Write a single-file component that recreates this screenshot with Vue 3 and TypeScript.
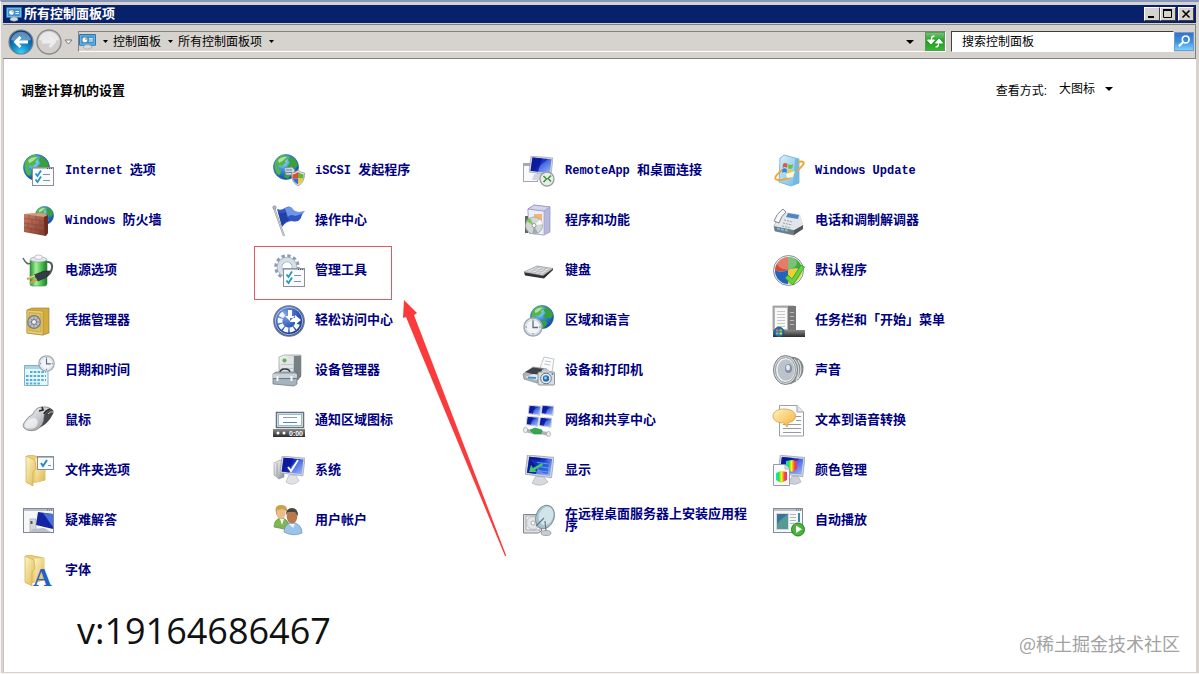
<script setup lang="ts">
import { ref } from 'vue'

interface Glyph {
  text: string
  x: number
  y: number
  kind: string
}

interface PanelItem {
  icon: string
  latin?: string
  text?: string
  glyph?: Glyph
}

const items: PanelItem[] = [
  { icon: 'internet', latin: 'Internet', text: '选项' },
  { icon: 'iscsi', latin: 'iSCSI', text: '发起程序' },
  { icon: 'remoteapp', latin: 'RemoteApp', text: '和桌面连接' },
  { icon: 'update', latin: 'Windows Update' },
  { icon: 'firewall', latin: 'Windows', text: '防火墙' },
  { icon: 'flag', text: '操作中心' },
  { icon: 'programs', text: '程序和功能' },
  { icon: 'phone', text: '电话和调制解调器' },
  { icon: 'power', text: '电源选项' },
  { icon: 'admin', text: '管理工具' },
  { icon: 'keyboard', text: '键盘' },
  { icon: 'defaults', text: '默认程序' },
  { icon: 'vault', text: '凭据管理器' },
  { icon: 'access', text: '轻松访问中心' },
  { icon: 'region', text: '区域和语言' },
  { icon: 'taskbar', text: '任务栏和「开始」菜单' },
  { icon: 'date', text: '日期和时间' },
  { icon: 'device', text: '设备管理器' },
  { icon: 'printers', text: '设备和打印机' },
  { icon: 'sound', text: '声音' },
  { icon: 'mouse', text: '鼠标' },
  { icon: 'tray', text: '通知区域图标', glyph: { text: '0:00', x: 17, y: 32, kind: 'glyph-clock' } },
  { icon: 'network', text: '网络和共享中心' },
  { icon: 'speech', text: '文本到语音转换' },
  { icon: 'folderopt', text: '文件夹选项' },
  { icon: 'system', text: '系统' },
  { icon: 'display', text: '显示' },
  { icon: 'color', text: '颜色管理' },
  { icon: 'trouble', text: '疑难解答' },
  { icon: 'users', text: '用户帐户' },
  { icon: 'install', text: '在远程桌面服务器上安装应用程序' },
  { icon: 'autoplay', text: '自动播放' },
  { icon: 'fonts', text: '字体', glyph: { text: 'A', x: 11, y: 32, kind: 'glyph-letter' } },
]

const crumbs: string[] = ['控制面板', '所有控制面板项']
const query = ref('')
const view = ref('大图标')
</script>

<template>
  <svg class="defs" aria-hidden="true">
    <defs>
      <radialGradient id="gSea" cx=".38" cy=".28" r=".8">
        <stop offset="0" stop-color="#b5e6fb" /><stop offset=".4" stop-color="#3c93dc" /><stop offset="1" stop-color="#0b3c94" />
      </radialGradient>
      <linearGradient id="gScreen" x1="0" y1="0" x2="1" y2="1">
        <stop offset="0" stop-color="#0a1a9c" /><stop offset=".45" stop-color="#1b35c8" /><stop offset=".5" stop-color="#4668e2" /><stop offset="1" stop-color="#a3bcf8" />
      </linearGradient>
      <linearGradient id="gMetal" x1="0" y1="0" x2="1" y2="1">
        <stop offset="0" stop-color="#fafafa" /><stop offset=".5" stop-color="#c9ccd0" /><stop offset="1" stop-color="#7f858c" />
      </linearGradient>
      <linearGradient id="gFolder" x1="0" y1="0" x2="1" y2="1">
        <stop offset="0" stop-color="#fdf6c8" /><stop offset="1" stop-color="#dfb650" />
      </linearGradient>
      <linearGradient id="gGreen" x1="0" y1="0" x2="1" y2="0">
        <stop offset="0" stop-color="#258f2d" /><stop offset=".35" stop-color="#a4f09a" /><stop offset=".7" stop-color="#43bd45" /><stop offset="1" stop-color="#1f7a28" />
      </linearGradient>
      <linearGradient id="gBrick" x1="0" y1="0" x2="1" y2="1">
        <stop offset="0" stop-color="#c98067" /><stop offset="1" stop-color="#7c3527" />
      </linearGradient>
      <linearGradient id="gDark" x1="0" y1="0" x2="0" y2="1">
        <stop offset="0" stop-color="#8a8a8a" /><stop offset="1" stop-color="#2c2c2c" />
      </linearGradient>
      <linearGradient id="gBlueBox" x1="0" y1="0" x2="1" y2="1">
        <stop offset="0" stop-color="#d8f1fc" /><stop offset="1" stop-color="#6db9e6" />
      </linearGradient>
      <linearGradient id="gRainbow" x1="0" y1="0" x2="1" y2="0">
        <stop offset="0" stop-color="#19d8f5" /><stop offset=".25" stop-color="#20e648" /><stop offset=".5" stop-color="#f7f41c" /><stop offset=".8" stop-color="#fa4131" /><stop offset="1" stop-color="#ef24b4" />
      </linearGradient>
      <radialGradient id="gBack" cx=".5" cy=".95" r=".9">
        <stop offset="0" stop-color="#35d4f8" /><stop offset=".45" stop-color="#1181c5" /><stop offset="1" stop-color="#0d3d7c" />
      </radialGradient>
      <radialGradient id="gOrb" cx=".35" cy=".3" r=".8">
        <stop offset="0" stop-color="#7ea5ea" /><stop offset=".6" stop-color="#2a52b0" /><stop offset="1" stop-color="#153174" />
      </radialGradient>
      <linearGradient id="gBubble" x1="0" y1="0" x2="1" y2="1">
        <stop offset="0" stop-color="#fff3bd" /><stop offset="1" stop-color="#f3b13a" />
      </linearGradient>
    </defs>

    <symbol id="globe" viewBox="0 0 26 26">
      <circle cx="13" cy="13" r="12.5" fill="url(#gSea)" stroke="#2c65a7" stroke-width=".7" />
      <path d="M3 6Q7 1 13 1L15 4 12 7 13 9 9 12 6 11 5 14 8 17 7 21 4 20Q0 13 3 6Z" fill="#51b848" />
      <path d="M17 2Q23 5 25 11L22 15 19 13 16 15 14 12 17 9 15 6ZM12 17L17 17 19 20 15 25 11 23Z" fill="#38a13c" />
      <path d="M5 6Q9 2 14 3Q10 7 6 9Z" fill="#e4f8cf" opacity=".65" />
    </symbol>

    <symbol id="checks" viewBox="0 0 22 19">
      <rect x=".5" y=".5" width="21" height="18" fill="#fbfcfe" stroke="#8a8f97" />
      <path d="M1 1.500H21" stroke="#b9bec6" stroke-width="1.2" />
      <path d="M15 1.500h1M17 1.500h1M19 1.500h1" stroke="#555" />
      <path d="M3.500 6.500L5.500 9 9 3.500M3.500 12.500L5.500 15 9 9.500" fill="none" stroke="#2593c4" stroke-width="1.8" />
      <path d="M11 7.500H18M11 13.500H18" stroke="#7d8fb3" />
    </symbol>

    <symbol id="clock" viewBox="0 0 20 20">
      <circle cx="10" cy="10" r="9" fill="#f1f5f8" stroke="#a2aab2" stroke-width="1.6" />
      <circle cx="10" cy="10" r="7.200" fill="none" stroke="#cdd6dd" />
      <path d="M10 4V10.500H15" fill="none" stroke="#5c6c7d" stroke-width="1.3" />
      <path d="M10 2.500V4M10 16V17.500M2.500 10H4M16 10H17.500" stroke="#7b8792" />
    </symbol>

    <symbol id="monitor" viewBox="0 0 24 20">
      <path d="M2 0L24 2 22 19 0 16Z" fill="#d3d8e0" stroke="#9198a4" stroke-width=".6" />
      <path d="M3.500 1.500L22.500 3.300 20.800 17.400 1.600 14.800Z" fill="url(#gScreen)" />
      <path d="M3.500 1.500L13 2.400 9 15.800 1.600 14.800Z" fill="#0a1796" opacity=".8" />
    </symbol>

    <symbol id="folder" viewBox="0 0 22 31">
      <path d="M2 1L5 0 20 3V25L11 27 2 28Z" fill="#ecd078" stroke="#cda948" stroke-width=".7" />
      <path d="M10 4L20 3V25L11 28Z" fill="url(#gFolder)" />
      <path d="M1 1L10 5 11 14 8 17V31L1 27Z" fill="url(#gFolder)" stroke="#d2ad4d" stroke-width=".7" />
    </symbol>

    <symbol id="i-panel" viewBox="0 0 16 16">
      <rect x=".5" y="1.500" width="15" height="10" rx=".5" fill="#71b9ea" stroke="#2f75a9" />
      <rect x="2" y="3" width="12" height="7" fill="#3f93d2" />
      <circle cx="5.500" cy="6.500" r="2.300" fill="#fff" /><path d="M5.500 6.500V4.200A2.300 2.300 0 0 1 7.800 6.500Z" fill="#f2b632" />
      <path d="M9.500 5.500H13M9.500 7.500H13" stroke="#fff" />
      <path d="M4 14Q4 11 8 11T12 14Q8 16.500 4 14Z" fill="#d9d9d9" stroke="#999" stroke-width=".5" />
    </symbol>

    <symbol id="i-internet" viewBox="0 0 33 33">
      <use href="#globe" x="1" y="0" width="27" height="27" />
      <use href="#checks" x="10" y="13" width="22" height="19" />
    </symbol>

    <symbol id="i-firewall" viewBox="0 0 33 33">
      <use href="#globe" x="13" y="2" width="19" height="19" />
      <path d="M2 10L19 9 26 11V29L24 32 2 28Z" fill="url(#gBrick)" />
      <path d="M2 10L19 9 26 11 22 13Z" fill="#d79a83" />
      <path d="M2 14.500L22 17M2 19L22 22M2 23.500L22 27M7 11V15M14 12V16M10 15.500V20M18 16.500V21.500M6 19.500V24M14 21V25.500M9 24.500V29M18 26.500V31" stroke="#6c2c20" stroke-width=".7" opacity=".45" />
      <path d="M22 13L26 11V29L22.500 32Z" fill="#6e2d22" />
    </symbol>

    <symbol id="i-power" viewBox="0 0 33 33">
      <path d="M1 4Q5 12 9 9" fill="none" stroke="#59636b" stroke-width="1.500" />
      <path d="M23 8Q31 7 30 14Q29 20 24 22" fill="none" stroke="#4f5963" stroke-width="2" />
      <rect x="8" y="5" width="17" height="27" rx="2.500" fill="url(#gGreen)" stroke="#4d8b50" stroke-width=".6" />
      <ellipse cx="16.500" cy="5.500" rx="8.500" ry="2.600" fill="#dfe5e8" stroke="#8b979d" stroke-width=".6" />
      <ellipse cx="16.500" cy="3.200" rx="3.800" ry="2.200" fill="#f7f9fb" stroke="#98a2ac" stroke-width=".6" />
      <path d="M12 21L22 17 28 17 25 23 16 27Z" fill="#353c48" stroke="#1e222b" stroke-width=".6" />
      <path d="M13 22L5 25M15 25.500L8 29" stroke="#c9a04a" stroke-width="2" /><path d="M13 21.500L6 24" stroke="#f6e6b4" stroke-width=".8" />
    </symbol>

    <symbol id="i-vault" viewBox="0 0 33 33">
      <path d="M5 6L10 4H27V29L21 31 5 29Z" fill="#d3ac3c" stroke="#90742b" stroke-width=".6" />
      <path d="M5 6L21 7V31L5 29Z" fill="#e8cf70" stroke="#a3842e" stroke-width=".6" />
      <path d="M7 8.500L19 9.500V28L7 26.500Z" fill="#dfc060" stroke="#b1923a" stroke-width=".6" />
      <circle cx="12" cy="18" r="6.300" fill="#bdc1c4" stroke="#747a80" stroke-width="1.200" />
      <path d="M12 12.500V23.500M6.500 18H17.500M8 14L16 22M16 14L8 22" stroke="#7d8389" stroke-width=".7" />
      <circle cx="12" cy="18" r="2.500" fill="#eff1f3" stroke="#6a7076" />
    </symbol>

    <symbol id="i-iscsi" viewBox="0 0 33 33">
      <use href="#globe" x="1" y="0" width="26" height="26" />
      <path d="M12 14L20 13 23 16 22 21 14 21Z" fill="#cdd6e4" stroke="#727d90" stroke-width=".7" /><path d="M14 16H20M14 18.500H20" stroke="#6e7f9c" />
      <path d="M26 16Q29 19 32.500 19Q33 28 26 32Q19 28 19.500 19Q23 19 26 16Z" fill="#e0e4e8" stroke="#858b93" stroke-width=".7" />
      <path d="M26 18Q23 20 20.500 20.500V24.500H26Z" fill="#e64b2f" /><path d="M26 18Q29 20 31.500 20.500V24.500H26Z" fill="#65b63b" />
      <path d="M20.500 24.500H26V30.500Q22 28.500 20.500 24.500Z" fill="#2674d4" /><path d="M26 24.500H31.500Q30 28.500 26 30.500Z" fill="#f6c72c" />
    </symbol>

    <symbol id="i-flag" viewBox="0 0 33 33">
      <path d="M5 5Q9 7 13 4T20 4Q23 10 33 7Q30 9 29 14Q26 19 20 17Q14 17 10 23Z" fill="#2f56c4" />
      <path d="M13 4Q18 2 20 4Q23 10 33 7Q29 11 23 12Q18 9 15 14Z" fill="#87aaf1" opacity=".75" />
      <path d="M6 8Q11 11 14 7L17 16Q12 18 10 22Z" fill="#183798" opacity=".65" />
      <path d="M2 4L12 32" stroke="#8b9097" stroke-width="2" /><path d="M2 4L12 32" stroke="#e3e5e8" stroke-width=".8" />
      <circle cx="2.500" cy="3.500" r="1.700" fill="#b4b8bd" stroke="#777" stroke-width=".5" />
    </symbol>

    <symbol id="i-admin" viewBox="0 0 33 33">
      <circle cx="15" cy="13" r="11" fill="none" stroke="#8e9dad" stroke-width="3.500" stroke-dasharray="3.200 2.560" />
      <circle cx="15" cy="13" r="7.500" fill="none" stroke="#a2afbd" stroke-width="5.500" />
      <circle cx="15" cy="13" r="7.500" fill="none" stroke="#d5dfe8" stroke-width="4" />
      <use href="#checks" x="11" y="14" width="22" height="19" />
    </symbol>

    <symbol id="i-access" viewBox="0 0 33 33">
      <circle cx="17" cy="17" r="15.200" fill="url(#gOrb)" stroke="#6e7b96" stroke-width="1.300" />
      <circle cx="17" cy="17" r="13.700" fill="none" stroke="#cfdbf2" stroke-width=".8" />
      <path d="M25.500 20A9 9 0 1 1 13 9" fill="none" stroke="#f4f8ff" stroke-width="5" stroke-dasharray="4.600 1.200" />
      <path d="M16 6H20V12H23L18 17 13 12H16ZM29 16L23 11V14H18V18H23V21Z" fill="#fff" />
    </symbol>

    <symbol id="i-remoteapp" viewBox="0 0 33 33">
      <rect x="1.500" y="9.500" width="14" height="18" fill="#f8f9fa" stroke="#a3a8ae" /><path d="M2 11H15" stroke="#a6acb6" stroke-width="2" />
      <path d="M12 20H19L20 26H10Z" fill="#d3d7dc" />
      <use href="#monitor" x="7" y="2" width="24" height="20" />
      <circle cx="25" cy="25" r="7" fill="#e9ecea" stroke="#999f9d" stroke-width="1.300" />
      <path d="M21.500 22L24.500 25 21.500 28M29 21.500L26 24.500 29 27.500" fill="none" stroke="#37943a" stroke-width="1.500" />
    </symbol>

    <symbol id="i-programs" viewBox="0 0 33 33">
      <path d="M6 5L12 1 28 3V28L22 31 7 29Z" fill="#b5b8dc" stroke="#8588b4" stroke-width=".6" />
      <path d="M6 5L22 7V31L7 29Z" fill="#eceefa" stroke="#9a9dbd" stroke-width=".6" />
      <path d="M6 5L12 1 28 3 22 7Z" fill="#d3d5ee" stroke="#8689aa" stroke-width=".6" />
      <path d="M12 10H20V20H12Z" fill="#f3b475" />
      <rect x="3" y="12" width="3" height="17" fill="#5f6670" />
      <circle cx="12" cy="21.500" r="8.500" fill="#d2d9d4" stroke="#949c9a" stroke-width=".7" />
      <path d="M12 21.500L4 17A9 9 0 0 1 8 14Z" fill="#83c45e" /><path d="M12 21.500L18 15.500A9 9 0 0 1 20.500 20Z" fill="#f8f9fa" /><path d="M12 21.500L10 30 16 29Z" fill="#9eacb2" />
      <circle cx="12" cy="21.500" r="2" fill="#fff" stroke="#838b91" stroke-width=".8" />
    </symbol>

    <symbol id="i-keyboard" viewBox="0 0 33 33">
      <path d="M2 18L21 21 31 14V16L22 24.500 3 21.500Z" fill="#2f3133" />
      <path d="M2 18L15 12 31 14.500 21 21.500Z" fill="#e9eaec" stroke="#777b7f" stroke-width=".6" />
      <path d="M5 17.500L23 20M8 16L25 18.500M11 14.500L27 17M14 13L29 15.500M8 19L17 12.500M12 19.500L21 13.500M16 20L25 14M20 21L29 14.500" stroke="#a4a8ad" stroke-width=".6" />
    </symbol>

    <symbol id="i-region" viewBox="0 0 33 33">
      <use href="#globe" x="8" y="1" width="24" height="24" />
      <use href="#clock" x="1" y="13" width="20" height="20" />
    </symbol>

    <symbol id="i-update" viewBox="0 0 33 33">
      <path d="M8 4L12 1 27 5V29L19 32 7 28Z" fill="url(#gBlueBox)" stroke="#5aa2cd" stroke-width=".7" />
      <path d="M23 5L27 5V29L21 31Z" fill="#74b8df" />
      <path d="M11 10Q13 8 15.500 10L15 14Q13 12 10.500 14Z" fill="#e85a2d" /><path d="M16.500 10Q19 12 21 10L20.500 14Q18 16 16 14Z" fill="#73bd3d" />
      <path d="M10.300 15Q12.500 13.500 15 15.500L14.500 19Q12 17 10 19Z" fill="#3384db" /><path d="M16 15.500Q18 17 20.500 15.500L20 19Q18 21 15.500 19Z" fill="#f7c834" />
      <path d="M10 16Q-1 25 6 26Q14 27 22 20M25 17Q34 9 31 8Q30 7 26 8" fill="none" stroke="#efa62d" stroke-width="1.900" />
      <path d="M14 20L23 17 21 23 15 24Z" fill="#fff8dc" />
    </symbol>

    <symbol id="i-phone" viewBox="0 0 33 33">
      <path d="M2 22L9 9 27 11 31 22 22 31 3 27Z" fill="#b7bdc3" stroke="#7d848b" stroke-width=".7" />
      <path d="M2 22L22 26 22 31 3 27Z" fill="#6f7a83" /><path d="M22 26L31 21V25L22 31Z" fill="#50585f" />
      <path d="M2 22L10 8 28 10 31 21 22 26Z" fill="#e2e5e9" />
      <path d="M16 9L27 11 26 15 14 13Z" fill="#4d87bf" />
      <path d="M2 17Q4 10 11 5L14 8Q9 12 7 19Z" fill="#f8f9fa" stroke="#767e86" stroke-width=".9" />
      <path d="M12 16L21 18M11 19L20 21M10 22L19 24" stroke="#9aa2aa" stroke-dasharray="2 1" />
      <path d="M5 24.500L17 27" stroke="#6cc1e3" stroke-width="2" stroke-dasharray="3 1" />
    </symbol>

    <symbol id="i-defaults" viewBox="0 0 33 33">
      <circle cx="16.500" cy="16.500" r="15" fill="#eceef1" stroke="#899097" />
      <path d="M16 16V3A13.500 13.500 0 0 0 3 16Q9 19 16 16Z" fill="#da4a32" /><path d="M16 16V3A13.500 13.500 0 0 1 30 16Q24 13 16 16Z" fill="#48a942" />
      <path d="M3 16A13.500 13.500 0 0 0 16 30V16Q9 19 3 16Z" fill="#2462bf" /><path d="M16 16V30A13.500 13.500 0 0 0 30 16Q24 13 16 16Z" fill="#f2cd35" />
      <ellipse cx="15" cy="9" rx="10" ry="6.500" fill="#fff" opacity=".28" />
      <path d="M13 24L16 21 20 25 29 11 32.500 13 21 31Z" fill="#62d63e" stroke="#2d9a26" stroke-width=".8" />
    </symbol>

    <symbol id="i-taskbar" viewBox="0 0 33 33">
      <path d="M1 2H22V27H1Z" fill="#b8b8b8" stroke="#777" stroke-width=".6" /><path d="M16 2H24V27H16Z" fill="#777" />
      <rect x="3" y="4" width="12" height="21" fill="#f8f8f8" /><path d="M5 7.500H13M5 10.500H13M5 13.500H13M5 16.500H13M5 19.500H13M5 22.500H13" stroke="#c5c9cd" />
      <path d="M18 8.500H22M18 12.500H22M18 16.500H22M18 20.500H22" stroke="#b9b9b9" />
      <rect x="1" y="26" width="32" height="7" fill="url(#gDark)" />
      <circle cx="7" cy="28" r="5" fill="#2073a8" stroke="#1e3f57" stroke-width=".6" />
      <path d="M4 25.500H6.500V27.500H4Z" fill="#eb7542" /><path d="M7.500 25.500H10V27.500H7.500Z" fill="#8cc84d" /><path d="M4 28.500H6.500V30.500H4Z" fill="#69b4f0" /><path d="M7.500 28.500H10V30.500H7.500Z" fill="#f7cf45" />
    </symbol>

    <symbol id="i-date" viewBox="0 0 33 33">
      <path d="M2.500 11.500H24L26 14V31.500H2.500Z" fill="#e8f5fa" stroke="#84b0c3" />
      <path d="M3 12H25V15H3Z" fill="#a9d4e5" />
      <path d="M8 18H24M4 22H24M4 26H24M4 29.500H19" stroke="#4bb1d3" stroke-width="2" stroke-dasharray="2.500 1.300" />
      <use href="#clock" x="16" y="1" width="17" height="17" />
    </symbol>

    <symbol id="i-device" viewBox="0 0 33 33">
      <path d="M7 3L12 1H29V22L26 26H7Z" fill="url(#gMetal)" stroke="#85898e" stroke-width=".6" />
      <path d="M22 2H29V23L22 26Z" fill="#787f85" /><path d="M9 4H21V18H9Z" fill="#e2e4e6" /><path d="M9 10.500H21M9 14.500H21" stroke="#c0c5c9" />
      <circle cx="12.500" cy="6.500" r="2" fill="#5fb543" />
      <path d="M8 19Q8 15 13 15T18 19" fill="none" stroke="#343a40" stroke-width="1.600" />
      <path d="M1 20L4 18H23L25 20V30L22 32 1 30Z" fill="#a6b3bc" stroke="#69747d" stroke-width=".7" />
      <path d="M1 20H25V24H1Z" fill="#c9d2d8" /><path d="M1 24.500H25" stroke="#6c7982" /><path d="M5.500 22V27M19.500 22V27" stroke="#f3f5f6" stroke-width="2" />
    </symbol>

    <symbol id="i-printers" viewBox="0 0 33 33">
      <path d="M18 14L22 3 32 5 30 18Z" fill="#fafbfc" stroke="#a9afb5" stroke-width=".7" /><path d="M23 7L29 8M22 10L28 11" stroke="#c1c7cd" />
      <path d="M1 20L11 13 25 15V24L15 29 2 25Z" fill="#aeb4ba" stroke="#757c84" stroke-width=".6" />
      <path d="M3 18L11 13.500 22 15 14 21Z" fill="#3e4449" /><path d="M3 23L14 26 22 22 12 20Z" fill="#e7ebee" /><path d="M6 23.500L14 24" stroke="#4296d6" stroke-width="2" />
      <rect x="16" y="18" width="16.500" height="13" rx="1" fill="#d8dee4" stroke="#7a838b" stroke-width=".8" /><rect x="20" y="15.500" width="7" height="3" fill="#c6ccd1" />
      <circle cx="24" cy="24.500" r="5.300" fill="#eef2f5" stroke="#69737d" /><circle cx="24" cy="24.500" r="3.200" fill="#226eb5" /><circle cx="23.500" cy="24" r="1.400" fill="#8bd2f7" /><circle cx="30.500" cy="20" r="1" fill="#5387b8" />
    </symbol>

    <symbol id="i-sound" viewBox="0 0 33 33">
      <path d="M18 3Q29 3 31 12Q32 22 24 27L18 30Z" fill="#868b90" stroke="#666b70" stroke-width=".7" />
      <path d="M22 5Q30 13 24 27M26 6Q32 15 26 25" fill="none" stroke="#d7dadd" stroke-width="1.300" />
      <ellipse cx="13.500" cy="16" rx="12" ry="14.500" fill="#d2d5d8" stroke="#7d8287" />
      <ellipse cx="13.500" cy="16" rx="10" ry="12.500" fill="#f0f2f4" stroke="#989da2" />
      <ellipse cx="14" cy="16" rx="8.500" ry="10.800" fill="#bcc3cb" />
      <ellipse cx="16.500" cy="14.500" rx="3.500" ry="4.500" fill="#8291a4" /><ellipse cx="16" cy="13.500" rx="2" ry="2.700" fill="#e5ebf2" />
    </symbol>

    <symbol id="i-mouse" viewBox="0 0 33 33">
      <path d="M19 9Q22 2 28 4Q33 6 31 10Q26 20 17 24Z" fill="#454749" />
      <path d="M2 19Q5 13 11 10Q13 4 19 3Q26 2 29 5Q22 8 22 13Q22 22 14 26Q6 28 2 24Q0 21 2 19Z" fill="url(#gMetal)" stroke="#727579" stroke-width=".7" />
      <path d="M3 20Q6 14 13 14Q18 17 14 23Q8 26 3 23Z" fill="#fff" opacity=".6" />
      <path d="M17 7L21 6 20 3M22 10Q23 7 28 5" fill="none" stroke="#252729" stroke-width="1.700" /><path d="M26 10Q28 7 31 8" fill="none" stroke="#bfc2c5" />
    </symbol>

    <symbol id="i-tray" viewBox="0 0 33 33">
      <rect x="4.500" y="8.500" width="27" height="15" fill="#f7fafc" stroke="#66717b" stroke-width="1.500" /><rect x="6.500" y="10.500" width="23" height="11" fill="#fff" stroke="#94bdd2" />
      <path d="M11 13.500H25" stroke="#8d9eb0" /><path d="M11 18.500H25" stroke="#4d82cc" />
      <rect x="1" y="25" width="32" height="8" fill="url(#gDark)" /><circle cx="6" cy="29" r="1.500" fill="#fff" /><circle cx="12" cy="29" r="1.500" fill="#fff" />
    </symbol>

    <symbol id="i-network" viewBox="0 0 33 33">
      <use href="#monitor" x="6" y="1" width="13" height="11" /><use href="#monitor" x="19" y="1" width="13" height="11" />
      <use href="#monitor" x="4" y="12" width="13" height="11" /><use href="#monitor" x="17" y="13" width="13" height="11" />
      <path d="M3 26L10 28H17L26 30" fill="none" stroke="#adb4b5" stroke-width="3.500" /><path d="M8 26L13 24 20 26 19 30 12 30Z" fill="#35a751" stroke="#218640" stroke-width=".6" />
      <ellipse cx="3.500" cy="26" rx="2" ry="2.800" fill="#eef0f0" stroke="#9aa0a1" stroke-width=".7" /><ellipse cx="26.500" cy="30" rx="2" ry="2.500" fill="#eef0f0" stroke="#9aa0a1" stroke-width=".7" />
    </symbol>

    <symbol id="i-speech" viewBox="0 0 33 33">
      <path d="M7.500 1.500H25L31.500 8V32H7.500Z" fill="#fdfdfd" stroke="#9ca0a4" /><path d="M25 1.500V8H31.500" fill="#e4e6e8" stroke="#9ca0a4" />
      <path d="M24 12.500H29M24 16.500H29M11 20.500H29M11 24.500H29M11 28.500H29" stroke="#959ba1" />
      <path d="M12 5C19 5 23.500 8 23.500 12S20 18 16.500 18.500L15 23 12 19C5 19 1 16 1 12S5 5 12 5Z" fill="url(#gBubble)" stroke="#c09643" stroke-width=".7" />
    </symbol>

    <symbol id="i-folderopt" viewBox="0 0 33 33">
      <use href="#folder" x="2" y="1" width="24" height="31" />
      <rect x="15.500" y="2.500" width="16" height="13" fill="#f8fafc" stroke="#868e96" /><path d="M16 3.500H31" stroke="#b1b8c0" /><path d="M19 9L21 12 25 6" fill="none" stroke="#258cc0" stroke-width="2" /><path d="M26 11.500H29" stroke="#8090a3" />
    </symbol>

    <symbol id="i-system" viewBox="0 0 33 33">
      <path d="M2 9L8 6 12 8V23L7 25 2 21Z" fill="url(#gMetal)" stroke="#8b9197" stroke-width=".6" /><path d="M5 9V22" stroke="#a0a6ab" />
      <path d="M17 21L24 21 27 27Q20 33 14 28Z" fill="#dfe3e7" stroke="#a9afb5" stroke-width=".6" />
      <use href="#monitor" x="8" y="2" width="25" height="21" />
      <path d="M16 13L19 17 26 6" fill="none" stroke="#f8fbff" stroke-width="2" />
    </symbol>

    <symbol id="i-display" viewBox="0 0 33 33">
      <path d="M14 22H21L26 28Q18 34 10 29Z" fill="#d6dade" stroke="#a0a5ab" stroke-width=".6" />
      <use href="#monitor" x="3" y="1" width="29" height="24" />
      <path d="M8 5.500L27 7.500 26 20 21 19Z" fill="#1546c8" opacity=".6" />
      <path d="M15 8.500L27 10M16 12.500L27 14M15 16.500L26 18" stroke="#5a9cf5" />
      <path d="M7 18L9 11 11 14 20 9 21 11 13 16 15 18Z" fill="#40cc67" />
    </symbol>

    <symbol id="i-color" viewBox="0 0 33 33">
      <path d="M20 22H26L29 28Q23 32 17 29Z" fill="#cdd1d6" stroke="#9aa0a6" stroke-width=".6" />
      <use href="#monitor" x="6" y="1" width="27" height="23" />
      <path d="M14 7L20 6 25 7V15L20 18 14 15Z" fill="url(#gRainbow)" />
      <path d="M1.500 10.500H13L17.500 15V31.500H1.500Z" fill="#fafafa" stroke="#969ba1" /><path d="M13 10.500V15H17.500" fill="#e0e3e6" stroke="#969ba1" stroke-width=".7" />
      <path d="M4 19L9 17 15 18V26L9 29 4 26Z" fill="url(#gRainbow)" />
    </symbol>

    <symbol id="i-trouble" viewBox="0 0 33 33">
      <rect x="1.500" y="4.500" width="30" height="24" fill="#f6f7f9" stroke="#808790" /><path d="M2 6H31" stroke="#bac0c7" stroke-width="2" /><path d="M25 6H26M27 6H28M29 6H30" stroke="#55606b" />
      <rect x="8" y="15" width="6" height="13" fill="#d5d9dd" stroke="#999fa5" stroke-width=".6" /><path d="M9.500 17V20" stroke="#555" stroke-width="2" />
      <path d="M10 25L22 24 29 28H9Z" fill="#b9bfc5" /><path d="M16 8L31 10V25L14 21Z" fill="#1325a5" /><path d="M21 9L31 10V23Z" fill="#4b6fdf" />
    </symbol>

    <symbol id="i-users" viewBox="0 0 33 33">
      <path d="M2 23Q2 15 9 14Q17 15 17 23L12 25Z" fill="#7fb755" stroke="#4b8334" stroke-width=".6" />
      <ellipse cx="9" cy="9" rx="4.700" ry="6" fill="#e9bd8c" /><path d="M4 9Q2 1 9 1T15 8L11 5 5 6V12Z" fill="#c9a24a" />
      <path d="M12 28Q12 20 20 18Q30 20 30 29Q21 33 12 28Z" fill="#9cc4e8" stroke="#567fae" stroke-width=".6" />
      <path d="M8 15L10 21 12 15Z" fill="#f5f8ec" /><path d="M17 20L21 24 23 20Z" fill="#eaf4fb" />
      <ellipse cx="20" cy="12.500" rx="5.300" ry="7" fill="#b87950" /><path d="M14 11Q14 4 20 4T26 12L23 8 16 8Z" fill="#4a443f" />
    </symbol>

    <symbol id="i-install" viewBox="0 0 33 33">
      <path d="M1.500 10.500H19.500V27L16 29H1.500Z" fill="#dfe2e4" stroke="#80868a" /><path d="M4 12H18V26H4Z" fill="#f4f5f6" stroke="#91979b" stroke-width=".7" />
      <circle cx="11" cy="19" r="6.500" fill="#e2e6e8" stroke="#a7adb1" stroke-width=".7" /><circle cx="11" cy="19" r="2" fill="#fff" stroke="#889096" stroke-width=".7" />
      <ellipse cx="23" cy="13" rx="9" ry="12" transform="rotate(20 23 13)" fill="#a6c3ce" stroke="#79919c" /><ellipse cx="24" cy="12" rx="7" ry="9.500" transform="rotate(20 24 12)" fill="#d0e4ea" />
      <path d="M22 14L14 22M23 17L24 27" stroke="#6b777e" stroke-width="1.200" /><ellipse cx="24" cy="29" rx="5" ry="2.500" fill="#c7cdd1" stroke="#878e93" stroke-width=".7" />
    </symbol>

    <symbol id="i-autoplay" viewBox="0 0 33 33">
      <rect x="1.500" y="4.500" width="29" height="24" fill="#f6f7f8" stroke="#858b90" /><path d="M2 6H30" stroke="#bec3c8" stroke-width="2" /><path d="M24 6H25M26 6H27M28 6H29" stroke="#535f68" />
      <rect x="4.500" y="9.500" width="12" height="16" fill="#549c93" stroke="#d3d9dc" /><path d="M5 20Q10 14 16 10H5Z" fill="#3c719e" />
      <path d="M18 10.500H24M18 13.500H24M18 16.500H24M18 19.500H22" stroke="#afb5ba" /><rect x="26" y="9" width="2" height="9" fill="#398aa2" />
      <circle cx="26" cy="25.500" r="6.500" fill="#48b438" stroke="#247f20" /><path d="M24 21.500V29L30 25.300Z" fill="#fff" />
    </symbol>

    <symbol id="i-fonts" viewBox="0 0 33 33">
      <use href="#folder" x="2" y="1" width="22" height="31" />
    </symbol>
  </svg>

  <div class="window">
    <header class="titlebar">
      <svg class="title-icon" aria-hidden="true"><use href="#i-panel" /></svg>
      <h1 class="title">所有控制面板项</h1>
      <div class="caption-buttons">
        <button type="button" class="caption" aria-label="最小化">
          <svg viewBox="0 0 12 10"><path d="M2 8H8" stroke="#000" stroke-width="2" /></svg>
        </button>
        <button type="button" class="caption" aria-label="最大化">
          <svg viewBox="0 0 12 10"><path d="M1.500 1V8.500H9.500V1M1 1H10" fill="none" stroke="#000" /><path d="M1 1H10" stroke="#000" stroke-width="2" /></svg>
        </button>
        <button type="button" class="caption close" aria-label="关闭">
          <svg viewBox="0 0 12 10"><path d="M2.500 1.500L9.500 8.500M9.500 1.500L2.500 8.500" stroke="#000" stroke-width="1.600" /></svg>
        </button>
      </div>
    </header>

    <nav class="toolbar">
      <div class="travel">
        <button type="button" class="round" aria-label="后退">
          <svg viewBox="0 0 26 26">
            <circle cx="13" cy="13" r="12" fill="url(#gBack)" stroke="#6f7f91" stroke-width="1.200" />
            <path d="M3 11A10.200 10.200 0 0 1 23 11Q13 14 3 11Z" fill="#c5def1" opacity=".45" />
            <path d="M20 13H8M12.500 8L7.500 13 12.500 18" fill="none" stroke="#fff" stroke-width="2.800" />
          </svg>
        </button>
        <button type="button" class="round" aria-label="前进">
          <svg viewBox="0 0 26 26">
            <circle cx="13" cy="13" r="12" fill="#d0cfcd" stroke="#8c8c8c" stroke-width="1.400" />
            <path d="M3 11A10.200 10.200 0 0 1 23 11Q13 14 3 11Z" fill="#f0f0f0" opacity=".75" />
            <path d="M6 13H18M13.500 8L18.500 13 13.500 18" fill="none" stroke="#ededed" stroke-width="2.800" />
          </svg>
        </button>
        <button type="button" class="history" aria-label="最近的页面">
          <svg viewBox="0 0 9 6"><path d="M1 1H8L4.500 5Z" fill="#fff" stroke="#777" /></svg>
        </button>
      </div>
      <div class="address">
        <svg class="address-icon" aria-hidden="true"><use href="#i-panel" /></svg>
        <svg class="arrow" viewBox="0 0 5 3" aria-hidden="true"><path d="M0 0H5L2.500 3Z" /></svg>
        <template v-for="crumb in crumbs" :key="crumb">
          <button type="button" class="crumb">{{ crumb }}</button>
          <svg class="arrow" viewBox="0 0 5 3" aria-hidden="true"><path d="M0 0H5L2.500 3Z" /></svg>
        </template>
        <button type="button" class="address-drop" aria-label="以前的位置">
          <svg viewBox="0 0 8 4"><path d="M0 0H8L4 4Z" /></svg>
        </button>
        <button type="button" class="refresh" aria-label="刷新">
          <svg viewBox="0 0 18 17">
            <path d="M8.500 3H7Q5.500 3 5.500 5V7H8.500L5 11 1.500 7H4" fill="#fff" stroke="#fff" />
            <path d="M9.500 14H11Q12.500 14 12.500 12V10H9.500L13 6 16.500 10H14" fill="#fff" stroke="#fff" />
          </svg>
        </button>
      </div>
      <form class="search" @submit.prevent>
        <input v-model="query" class="search-box" type="text" placeholder="搜索控制面板" aria-label="搜索控制面板" />
        <button type="submit" class="search-button" aria-label="搜索">
          <svg viewBox="0 0 20 20"><circle cx="12" cy="7.500" r="4" fill="none" stroke="#fff" stroke-width="2" /><path d="M9 10.500L4 15.500" stroke="#fff" stroke-width="2.600" /></svg>
        </button>
      </form>
    </nav>

    <main class="panel">
      <div class="panel-head">
        <h2 class="heading">调整计算机的设置</h2>
        <div class="view">
          <label for="view-mode">查看方式:</label>
          <span class="view-select">
            <select id="view-mode" v-model="view">
              <option>类别</option>
              <option>大图标</option>
              <option>小图标</option>
            </select>
            <svg viewBox="0 0 8 4" aria-hidden="true"><path d="M0 0H8L4 4Z" /></svg>
          </span>
        </div>
      </div>

      <div class="items">
        <a v-for="item in items" :key="item.icon" class="item" href="#">
          <svg class="item-icon" viewBox="0 0 33 33" aria-hidden="true">
            <use :href="'#i-' + item.icon" width="33" height="33" />
            <text v-if="item.glyph" :class="item.glyph.kind" :x="item.glyph.x" :y="item.glyph.y">{{ item.glyph.text }}</text>
          </svg>
          <span class="label"><span v-if="item.latin" class="latin">{{ item.latin }}{{ item.text ? '&nbsp;' : '' }}</span>{{ item.text }}</span>
        </a>
      </div>

      <footer class="foot">
        <p class="contact">v:19164686467</p>
        <p class="watermark">@稀土掘金技术社区</p>
      </footer>

      <svg class="annotation" viewBox="0 0 254 312" aria-hidden="true">
        <rect x=".5" y=".5" width="137" height="53" fill="none" stroke="#df5a62" />
        <path d="M150 54L163 67 160 69 252 309V310H251L152 71 149 72Z" fill="#fb3b3b" />
      </svg>
    </main>
  </div>
</template>

<style>
body {
  margin: 0;
  background: #fff;
}
</style>

<style scoped>
.defs {
  position: absolute;
  width: 0;
  height: 0;
}

.window {
  box-sizing: border-box;
  display: flex;
  flex-direction: column;
  min-height: 100vh;
  padding: 3px 3px 1px 2px;
  border: 1px solid #f6f5f3;
  border-top: 2px solid #8797b7;
  border-right: 0;
  background: #d6d3ce;
  font-family: "Liberation Sans", "Noto Sans CJK SC", sans-serif;
  font-size: 12px;
  color: #000;
}

button {
  padding: 0;
  border: 0;
  background: none;
  color: inherit;
  font: inherit;
}

svg {
  display: block;
}

.titlebar {
  display: flex;
  align-items: center;
  height: 18px;
  padding: 0 2px 0 3px;
  background: #08216b;
}

.title-icon {
  width: 16px;
  height: 16px;
}

.title {
  flex: 1;
  margin: 0 0 0 2px;
  color: #fff;
  font-size: 13px;
  line-height: 18px;
}

.caption-buttons {
  display: flex;
}

.caption {
  box-sizing: border-box;
  width: 16px;
  height: 14px;
  padding: 1px;
  border: 1px solid;
  border-color: #fff #404040 #404040 #fff;
  background: #d6d3ce;
}

.caption svg {
  width: 12px;
  height: 10px;
}

.close {
  margin-left: 2px;
}

.toolbar {
  box-sizing: border-box;
  display: flex;
  align-items: center;
  height: 35px;
  margin-top: 1px;
  padding: 0 1px 0 5px;
  border: 1px solid #84827e;
  border-width: 1px 1px 1px 0;
  background: #d6d3ce;
}

.travel {
  display: flex;
  align-items: center;
  gap: 2px;
  width: 70px;
}

.round svg {
  width: 26px;
  height: 26px;
}

.history svg {
  width: 9px;
  height: 6px;
}

.address {
  box-sizing: border-box;
  display: flex;
  flex: 1;
  align-items: center;
  height: 21px;
  border: 1px solid;
  border-color: #84827e #fff #fff #84827e;
}

.address-icon {
  width: 17px;
  height: 17px;
}

.arrow {
  flex: none;
  width: 5px;
  height: 3px;
  margin: 0 5px 0 7px;
}

.crumb {
  line-height: 16px;
  white-space: nowrap;
}

.address-drop {
  margin: 0 11px 0 auto;
}

.address-drop svg,
.view-select svg {
  width: 8px;
  height: 4px;
}

.refresh,
.search-button {
  box-sizing: border-box;
  width: 20px;
  height: 19px;
  border: 1px solid #5b9a5b;
  background: linear-gradient(#6ec46d, #249a27 50%, #35b834);
}

.refresh svg,
.search-button svg {
  width: 18px;
  height: 17px;
}

.search {
  display: flex;
  align-items: center;
  width: 243px;
  margin-left: 5px;
}

.search-box {
  box-sizing: border-box;
  flex: 1;
  min-width: 0;
  height: 21px;
  padding: 0 10px;
  border: 1px solid;
  border-color: #404040 #fff #fff #404040;
  border-radius: 0;
  background: #fff;
  font: inherit;
  outline: 0;
}

.search-box::placeholder {
  color: #000;
  opacity: 1;
}

.search-button {
  border-color: #6f9ccb;
  background: linear-gradient(#3573c9, #3c8fe0 50%, #7bd3fb);
}

.panel {
  position: relative;
  flex: 1;
  padding: 20px 0 0 17px;
  border-left: 1px solid #c9c6c1;
  background: #fff;
}

.panel-head {
  display: flex;
  justify-content: space-between;
  align-items: center;
  height: 20px;
  padding-right: 83px;
}

.heading {
  margin: 0;
  font-size: 13px;
}

.view {
  display: flex;
  align-items: center;
  gap: 12px;
}

.view-select {
  display: flex;
  align-items: center;
  gap: 9px;
}

.view-select select {
  padding: 0;
  border: 0;
  appearance: none;
  background: none;
  color: inherit;
  font: inherit;
}

.items {
  display: grid;
  grid-template-columns: repeat(auto-fill, 250px);
  grid-auto-rows: 50px;
  margin: 46px 0 0 1px;
}

.item {
  display: flex;
  align-items: center;
  gap: 10px;
  color: #000080;
  text-decoration: none;
}

.item-icon {
  flex: none;
  width: 33px;
  height: 33px;
}

.glyph-clock {
  fill: #fff;
  font: bold 7px "Liberation Sans", sans-serif;
}

.glyph-letter {
  fill: #2461c2;
  font: bold 26px "Liberation Serif", serif;
}

.label {
  max-width: 184px;
  font-size: 13px;
  font-weight: bold;
  line-height: 12px;
}

.latin {
  font-family: "Liberation Mono", monospace;
  font-size: 12px;
}

.foot {
  display: flex;
  justify-content: space-between;
  align-items: flex-end;
  margin-top: 16px;
  padding-right: 16px;
}

.contact {
  margin: 0 0 4px 56px;
  font-family: "Open Sans", "Noto Sans", sans-serif;
  font-size: 36px;
  line-height: 40px;
  color: #111;
}

.watermark {
  margin: 0;
  font-family: "Noto Sans CJK SC", sans-serif;
  font-size: 18px;
  line-height: 24px;
  color: #a2a2a2;
}

.annotation {
  position: absolute;
  top: 187px;
  left: 250px;
  width: 254px;
  height: 312px;
  pointer-events: none;
}
</style>
